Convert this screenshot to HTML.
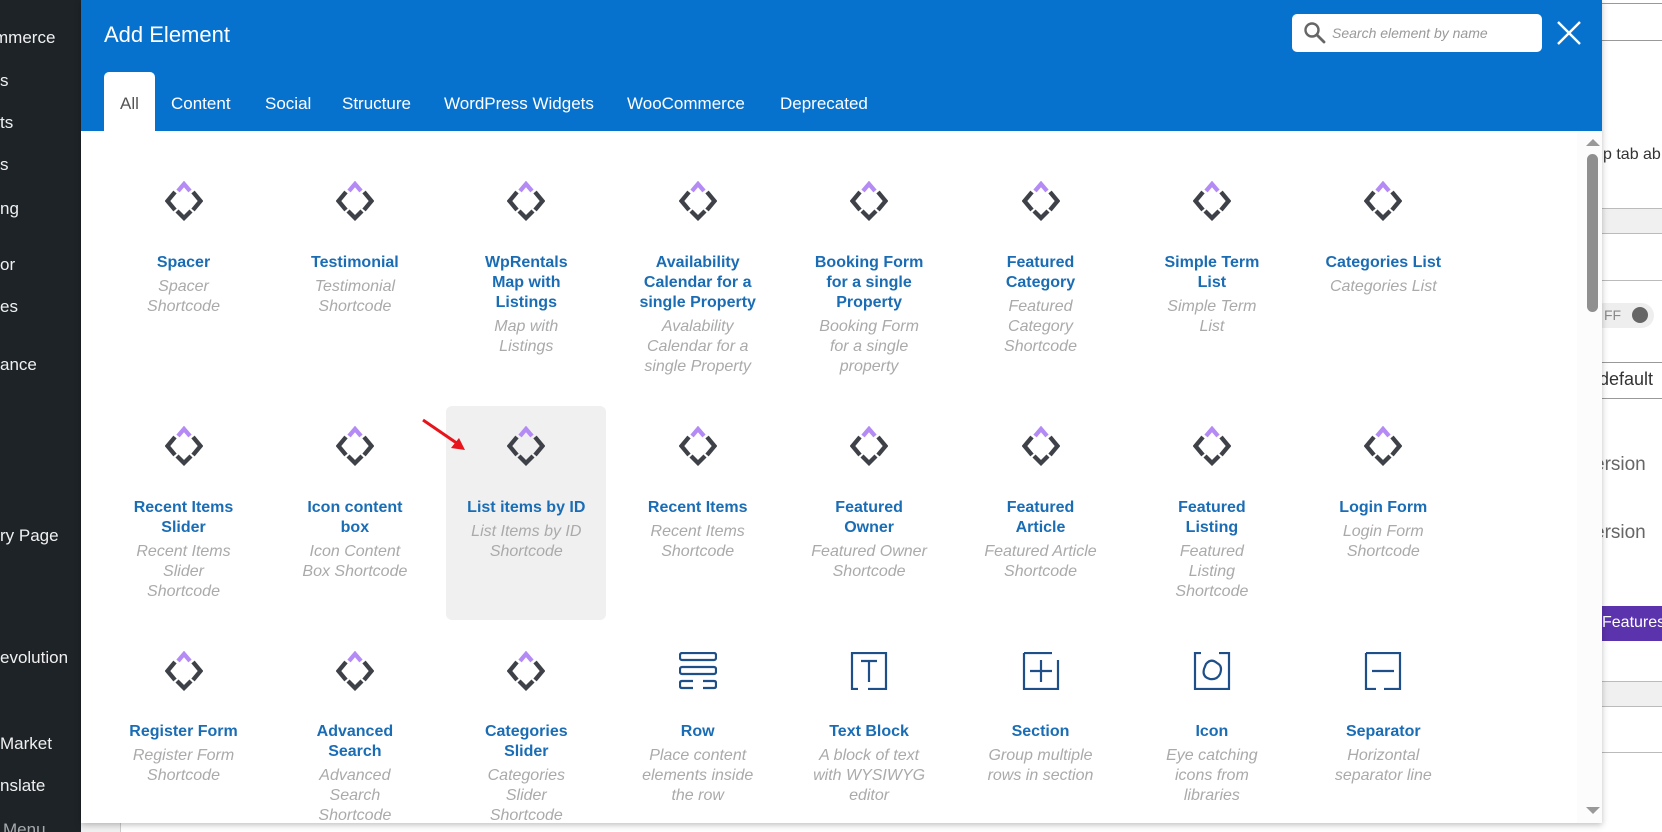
<!DOCTYPE html>
<html><head><meta charset="utf-8">
<style>
*{margin:0;padding:0;box-sizing:border-box}
body{width:1662px;height:832px;overflow:hidden;position:relative;background:#f0f0f1;font-family:"Liberation Sans",Arial,sans-serif}
#side{position:absolute;left:0;top:0;width:81px;height:832px;background:#1d2327;color:#f0f0f1;font-size:17px;overflow:hidden}
#side div{position:absolute;left:0;white-space:nowrap;transform:translateY(-50%)}
#bg{position:absolute;left:81px;top:0;width:1581px;height:832px;background:#fff}
#right{position:absolute;left:1602px;top:0;width:60px;height:832px;background:#fff;overflow:hidden;font-size:16px;color:#333}
#right .ln{position:absolute;left:0;width:60px;height:1px;background:#999}
#modal{position:absolute;left:81px;top:0;width:1521px;height:823px;background:#fff;box-shadow:0 2px 6px rgba(0,0,0,.25);overflow:hidden}
#hdr{position:absolute;left:0;top:0;width:1521px;height:131px;background:#0772cd}
#title{position:absolute;left:23px;top:22px;color:#fff;font-size:22px}
.tab{position:absolute;top:94px;color:#fff;font-size:17px;white-space:nowrap}
#tabAll{position:absolute;left:23px;top:72px;width:51px;height:60px;background:#fff;border-radius:5px 5px 0 0}
#search{position:absolute;left:1211px;top:14px;width:250px;height:38px;background:#fff;border-radius:5px}
#search span{position:absolute;left:40px;top:11px;font-size:14px;font-style:italic;color:#999}
.c{position:absolute;width:160px;text-align:center}
.c svg{display:block;margin:0 auto}
.t{color:#1a6db5;font-weight:bold;font-size:16px;line-height:20px}
.d{color:#aaa;font-style:italic;font-size:16px;line-height:20px;margin-top:4px}
</style></head><body>
<div id="side">
<div style="top:38px;left:-6px">mmerce</div>
<div style="top:81px">s</div>
<div style="top:123px">ts</div>
<div style="top:165px">s</div>
<div style="top:209px">ng</div>
<div style="top:265px">or</div>
<div style="top:307px">es</div>
<div style="top:365px">ance</div>
<div style="top:536px">ry Page</div>
<div style="top:658px">evolution</div>
<div style="top:744px">Market</div>
<div style="top:786px">nslate</div>
<div style="top:830px;left:3px;color:#a7aaad">Menu</div>
</div>
<div id="bg"></div>
<div style="position:absolute;left:81px;top:823px;width:40px;height:9px;background:#f0f0f1;border-right:1px solid #ccc"></div>
<div id="right">
<div class="ln" style="top:3px"></div>
<div class="ln" style="top:40px"></div>
<div style="position:absolute;left:1px;top:146px;white-space:nowrap;font-size:16px">p tab ab</div>
<div style="position:absolute;left:0;top:208px;width:60px;height:26px;background:#f0f0f0;border-top:1px solid #bbb;border-bottom:1px solid #bbb"></div>
<div class="ln" style="top:280px;background:#bbb"></div>
<div style="position:absolute;left:-10px;top:303px;width:62px;height:25px;border-radius:13px;background:#eee;font-size:14px;color:#888;padding:4px 0 0 12px">FF<span style="position:absolute;left:40px;top:4px;width:16px;height:16px;border-radius:50%;background:#666"></span></div>
<div class="ln" style="top:362px"></div>
<div style="position:absolute;left:-3px;top:369px;font-size:18px">default</div>
<div class="ln" style="top:398px"></div>
<div style="position:absolute;left:-8px;top:454px;font-size:19px;color:#666">ersion</div>
<div style="position:absolute;left:-8px;top:522px;font-size:19px;color:#666">ersion</div>
<div style="position:absolute;left:0;top:606px;width:60px;height:35px;background:#5b33ad;color:#fff;font-size:16px;padding:8px 0 0 0">Features</div>
<div style="position:absolute;left:0;top:681px;width:60px;height:26px;background:#f0f0f0;border-top:1px solid #bbb;border-bottom:1px solid #bbb"></div>
<div class="ln" style="top:752px;background:#bbb"></div>
</div>
<div id="modal">
<div id="hdr">
<div id="title">Add Element</div>
<div id="tabAll"></div>
<div class="tab" style="left:39px;color:#555">All</div>
<div class="tab" style="left:90px">Content</div>
<div class="tab" style="left:184px">Social</div>
<div class="tab" style="left:261px">Structure</div>
<div class="tab" style="left:363px">WordPress Widgets</div>
<div class="tab" style="left:546px">WooCommerce</div>
<div class="tab" style="left:699px">Deprecated</div>
<div id="search"><svg width="24" height="24" style="position:absolute;left:11px;top:7px" viewBox="0 0 24 24"><circle cx="9" cy="9" r="6.5" fill="none" stroke="#666" stroke-width="2.4"/><path d="M14 14l7 7" stroke="#666" stroke-width="2.8" stroke-linecap="round"/></svg><span>Search element by name</span></div>
<svg style="position:absolute;left:1475px;top:20px" width="26" height="26" viewBox="0 0 26 26"><path d="M2 2L24 24M24 2L2 24" stroke="#fff" stroke-width="2.4"/></svg>
</div>
<div style="position:absolute;left:1496px;top:131px;width:25px;height:692px;background:#fcfcfc"></div>
<svg style="position:absolute;left:1505px;top:138px" width="14" height="8"><path d="M0 8L7 1L14 8Z" fill="#999"/></svg>
<div style="position:absolute;left:1506px;top:154px;width:11px;height:158px;background:#8f8f8f;border-radius:6px"></div>
<svg style="position:absolute;left:1505px;top:807px" width="14" height="8"><path d="M0 0L7 7L14 0Z" fill="#999"/></svg>
<div style="position:absolute;left:365px;top:406px;width:160px;height:214px;background:#f0f0f0;border-radius:6px"></div>
<svg style="position:absolute;left:340px;top:418px" width="50" height="36"><path d="M2 2L40 28" stroke="#e8141c" stroke-width="3"/><path d="M44 32L30 30L38 20Z" fill="#e8141c"/></svg>
<div id="grid"></div>
</div>
<script>
var D='<svg width="38" height="40" viewBox="0 0 38 40"><path d="M13 10L19 3L25 10" fill="none" stroke="#b48af5" stroke-width="4.3"/><path d="M10 11L2.5 20L10 29M28 11L35.5 20L28 29M12 30L19 37L26 30" fill="none" stroke="#3e4148" stroke-width="4.3"/></svg>';
var B='stroke="#1f4f88" stroke-width="2.2" fill="none"';
var I={
row:'<svg width="38" height="38" viewBox="0 0 38 38"><rect x="1" y="1" width="36" height="7" rx="2" '+B+'/><rect x="1" y="15" width="36" height="7" rx="2" '+B+'/><path d="M14 29H3Q1 29 1 31V34Q1 36 3 36H14M24 29H35Q37 29 37 31V34Q37 36 35 36H24" '+B+'/></svg>',
text:'<svg width="38" height="38" viewBox="0 0 38 38"><path d="M8 1H2V37H8M30 1H36V37H18M8 1H30" '+B+'/><path d="M11 9H27M19 9V30" '+B+'/></svg>',
sect:'<svg width="38" height="38" viewBox="0 0 38 38"><path d="M2 1H30M36 8V37H2V1" '+B+'/><path d="M19 8V30M8 19H30" '+B+'/></svg>',
icon:'<svg width="38" height="38" viewBox="0 0 38 38"><path d="M8 1H2V37H36V1H26" '+B+'/><path d="M13 12Q18 6 24 11Q30 14 27 22Q24 28 17 27Q9 25 11 17Z" '+B+'/></svg>',
sep:'<svg width="38" height="38" viewBox="0 0 38 38"><path d="M2 1H36V37H20M12 37H2V1" '+B+'/><path d="M8 19H30" '+B+'/></svg>'
};
var rows=[[201,253],[446,498],[671,722]];
var data=[
[["Spacer","Spacer<br>Shortcode"],["Testimonial","Testimonial<br>Shortcode"],["WpRentals<br>Map with<br>Listings","Map with<br>Listings"],["Availability<br>Calendar for a<br>single Property","Avalability<br>Calendar for a<br>single Property"],["Booking Form<br>for a single<br>Property","Booking Form<br>for a single<br>property"],["Featured<br>Category","Featured<br>Category<br>Shortcode"],["Simple Term<br>List","Simple Term<br>List"],["Categories List","Categories List"]],
[["Recent Items<br>Slider","Recent Items<br>Slider<br>Shortcode"],["Icon content<br>box","Icon Content<br>Box Shortcode"],["List items by ID","List Items by ID<br>Shortcode"],["Recent Items","Recent Items<br>Shortcode"],["Featured<br>Owner","Featured Owner<br>Shortcode"],["Featured<br>Article","Featured Article<br>Shortcode"],["Featured<br>Listing","Featured<br>Listing<br>Shortcode"],["Login Form","Login Form<br>Shortcode"]],
[["Register Form","Register Form<br>Shortcode"],["Advanced<br>Search","Advanced<br>Search<br>Shortcode"],["Categories<br>Slider","Categories<br>Slider<br>Shortcode"],["Row","Place content<br>elements inside<br>the row","row"],["Text Block","A block of text<br>with WYSIWYG<br>editor","text"],["Section","Group multiple<br>rows in section","sect"],["Icon","Eye catching<br>icons from<br>libraries","icon"],["Separator","Horizontal<br>separator line","sep"]]
];
var h='';
for(var r=0;r<3;r++)for(var c=0;c<8;c++){
 var e=data[r][c],cx=183.5+c*171.4-81;
 var ic=e[2]?I[e[2]]:D, ih=e[2]?38:40;
 h+='<div class="c" style="left:'+(cx-80)+'px;top:'+(rows[r][0]-ih/2)+'px">'+ic+'</div>';
 h+='<div class="c" style="left:'+(cx-80)+'px;top:'+rows[r][1]+'px"><div class="t">'+e[0]+'</div><div class="d">'+e[1]+'</div></div>';
}
document.getElementById('grid').innerHTML=h;
</script>
</body></html>
